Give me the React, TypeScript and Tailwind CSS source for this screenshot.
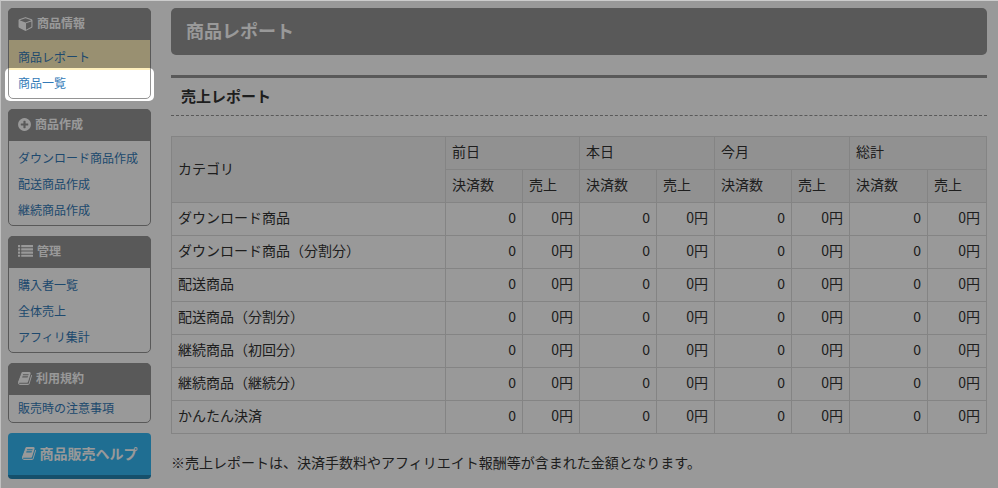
import type { ReactNode } from 'react';
import { clsx } from 'clsx';

interface MenuGroup {
  title: string;
  icon: ReactNode;
  items: string[];
  compact?: boolean;
}

const CubeIcon = () => (
  <svg viewBox="0 0 1664 1792" className="h-[15px] w-[15px]" fill="currentColor" aria-hidden="true">
    <path d="M896 1629l640-349v-636l-640 233v752zm-64-865l698-254-698-254-698 254zm832-252v768q0 35-18 65t-49 47l-704 384q-28 16-61 16t-61-16l-704-384q-31-17-49-47t-18-65v-768q0-40 23-73t61-47l704-256q22-8 44-8t44 8l704 256q38 14 61 47t23 73z" />
  </svg>
);

const PlusCircleIcon = () => (
  <svg viewBox="0 0 1536 1792" className="h-[15px] w-[13px]" fill="currentColor" aria-hidden="true">
    <path d="M1216 960v-128q0-26-19-45t-45-19h-256v-256q0-26-19-45t-45-19h-128q-26 0-45 19t-19 45v256h-256q-26 0-45 19t-19 45v128q0 26 19 45t45 19h256v256q0 26 19 45t45 19h128q26 0 45-19t19-45v-256h256q26 0 45-19t19-45zm320-64q0 209-103 385.500t-279.500 279.500-385.500 103-385.500-103-279.500-279.500-103-385.500 103-385.500 279.500-279.500 385.500-103 385.500 103 279.500 279.500 103 385.500z" />
  </svg>
);

const ListIcon = () => (
  <svg viewBox="0 0 1792 1792" className="size-[15px]" fill="currentColor" aria-hidden="true">
    {[128, 512, 896, 1280].map((y) => (
      <g key={y}>
        <rect x="0" y={y} width="256" height="256" rx="32" />
        <rect x="384" y={y} width="1408" height="256" rx="32" />
      </g>
    ))}
  </svg>
);

const BookIcon = () => (
  <svg viewBox="64 0 1664 1792" className="h-[15px] w-[14px]" fill="currentColor" aria-hidden="true">
    <path d="M1703 478q40 57 18 129l-275 906q-19 64-76.500 107.500t-122.500 43.500h-923q-77 0-148.500-53.500t-99.500-131.500q-24-67-2-127 0-4 3-27t4-37q1-8-3-21.500t-3-19.500q2-11 8-21t16.500-23.500 16.500-23.500q23-38 45-91.500t30-91.500q3-10 .5-30t-.5-28q3-11 17-28t17-23q21-36 42-92t25-90q1-9-2.500-32t.5-28q4-13 22-30.500t22-22.500q19-26 42.500-84.500t27.500-96.500q1-8-3-25.500t-2-26.500q2-8 9-18t18-23 17-21q8-12 16.500-30.500t15-35 16-36 19.500-32 26.500-23.500 36-11.500 47.500 5.500l-1 3q38-9 51-9h761q74 0 114 56t18 130l-274 906q-36 119-71.500 153.500t-128.500 34.500h-869q-27 0-38 15-11 16-1 43 24 70 144 70h923q29 0 56-15.500t35-41.500l300-987q7-22 5-57 38 15 59 43zm-1064 2q-4 13 2 22.500t20 9.500h608q13 0 25.500-9.500t16.500-22.500l21-64q4-13-2-22.500t-20-9.500h-608q-13 0-25.500 9.500t-16.500 22.500zm-83 256q-4 13 2 22.500t20 9.500h608q13 0 25.500-9.500t16.500-22.500l21-64q4-13-2-22.500t-20-9.500h-608q-13 0-25.500 9.500t-16.500 22.500z" />
  </svg>
);

const menu: MenuGroup[] = [
  { title: '商品情報', icon: <CubeIcon />, items: ['商品レポート', '商品一覧'] },
  { title: '商品作成', icon: <PlusCircleIcon />, items: ['ダウンロード商品作成', '配送商品作成', '継続商品作成'] },
  { title: '管理', icon: <ListIcon />, items: ['購入者一覧', '全体売上', 'アフィリ集計'] },
  { title: '利用規約', icon: <BookIcon />, items: ['販売時の注意事項'], compact: true },
];

const currentItem = '商品レポート';
const guideItem = '商品一覧';

const periods = ['前日', '本日', '今月', '総計'];

const rows = [
  'ダウンロード商品',
  'ダウンロード商品（分割分）',
  '配送商品',
  '配送商品（分割分）',
  '継続商品（初回分）',
  '継続商品（継続分）',
  'かんたん決済',
].map((category) => ({ category, results: periods.map(() => ({ count: 0, sales: 0 })) }));

function SideMenu({ group }: { group: MenuGroup }) {
  return (
    <section className="rounded-[5px] border border-[#949494] pb-0.5">
      <h2 className="-mx-px -mt-px flex h-8 items-center gap-1 rounded-t-[5px] bg-[#949494] px-2.5 pb-0.5 text-xs font-bold text-white">
        {group.icon}
        {group.title}
      </h2>
      <ul>
        {group.items.map((item, i) => (
          <li
            key={item}
            className={clsx(
              'relative px-[9px] text-xs',
              group.compact ? 'leading-[25px]' : 'leading-[26px]',
              i === 0 && !group.compact && 'pt-1',
              item === currentItem && 'bg-[#fff0bd]'
            )}
          >
            <a href="#" className="text-[#337ab7] hover:underline">
              {item}
            </a>
            {/* guide spotlight, the shadow dims the rest of the page */}
            {item === guideItem && (
              <span className="pointer-events-none absolute -inset-x-1 -top-0.5 -bottom-[5px] z-10 rounded-[5px] shadow-[0_0_0_2000px_rgba(0,0,0,0.4)]" />
            )}
          </li>
        ))}
      </ul>
    </section>
  );
}

function ReportTable() {
  return (
    <table className="w-full table-fixed border-collapse text-sm leading-5">
      <colgroup>
        <col />
        {periods.flatMap((p, i) => [
          <col key={`${p}-count`} className={i === periods.length - 1 ? 'w-[78px]' : 'w-[77px]'} />,
          <col key={`${p}-sales`} className={i === 0 ? 'w-[57px]' : i === periods.length - 1 ? 'w-[59px]' : 'w-[58px]'} />,
        ])}
      </colgroup>
      <thead className="bg-[#f2f2f2] text-left">
        <tr>
          <th rowSpan={2} className="border border-[#dcdcdc] px-1.5 pt-1 pb-2 font-normal">
            カテゴリ
          </th>
          {periods.map((p) => (
            <th key={p} colSpan={2} className="border border-[#dcdcdc] px-1.5 pt-1 pb-2 font-normal">
              {p}
            </th>
          ))}
        </tr>
        <tr>
          {periods.flatMap((p) => [
            <th key={`${p}-count`} className="border border-[#dcdcdc] px-1.5 pt-1 pb-2 font-normal">
              決済数
            </th>,
            <th key={`${p}-sales`} className="border border-[#dcdcdc] px-1.5 pt-1 pb-2 font-normal">
              売上
            </th>,
          ])}
        </tr>
      </thead>
      <tbody>
        {rows.map((row) => (
          <tr key={row.category}>
            <td className="border border-[#dcdcdc] px-1.5 pt-1 pb-2">{row.category}</td>
            {row.results.flatMap((r, i) => [
              <td key={`${i}-count`} className="border border-[#dcdcdc] px-1.5 pt-1 pb-2 text-right">
                {r.count}
              </td>,
              <td key={`${i}-sales`} className="border border-[#dcdcdc] px-1.5 pt-1 pb-2 text-right">
                {r.sales}円
              </td>,
            ])}
          </tr>
        ))}
      </tbody>
    </table>
  );
}

export default function App() {
  return (
    <div className="flex min-h-screen items-start gap-5 overflow-hidden border-t border-l border-t-[#cccccc] border-l-[#c0c0c0] bg-white pt-[7px] pr-[11px] pl-[7px] font-['Noto_Sans_CJK_JP',sans-serif] text-[#333333]">
      <aside className="flex w-[143px] shrink-0 flex-col gap-2.5">
        {menu.map((group) => (
          <SideMenu key={group.title} group={group} />
        ))}
        <a
          href="#"
          className="flex h-[46px] items-center justify-center gap-1 rounded-[4px] border-b-4 border-[#2685b2] bg-[#35b7f3] pb-0.5 text-sm font-bold text-white"
        >
          <BookIcon />
          商品販売ヘルプ
        </a>
      </aside>

      <main className="min-w-0 flex-1">
        <h1 className="rounded-[5px] bg-[#949494] px-[15px] pt-[9px] pb-[11px] text-lg leading-[27px] font-bold text-white">
          商品レポート
        </h1>
        <h2 className="mt-5 mb-5 border-t-[3px] border-b border-t-[#949494] border-b-[#949494] px-2.5 pt-[7px] pb-[9px] text-[15px] leading-[21px] font-bold [border-bottom-style:dashed]">
          売上レポート
        </h2>
        <ReportTable />
        <p className="mt-[18px] text-sm leading-5">
          ※売上レポートは、決済手数料やアフィリエイト報酬等が含まれた金額となります。
        </p>
      </main>
    </div>
  );
}
